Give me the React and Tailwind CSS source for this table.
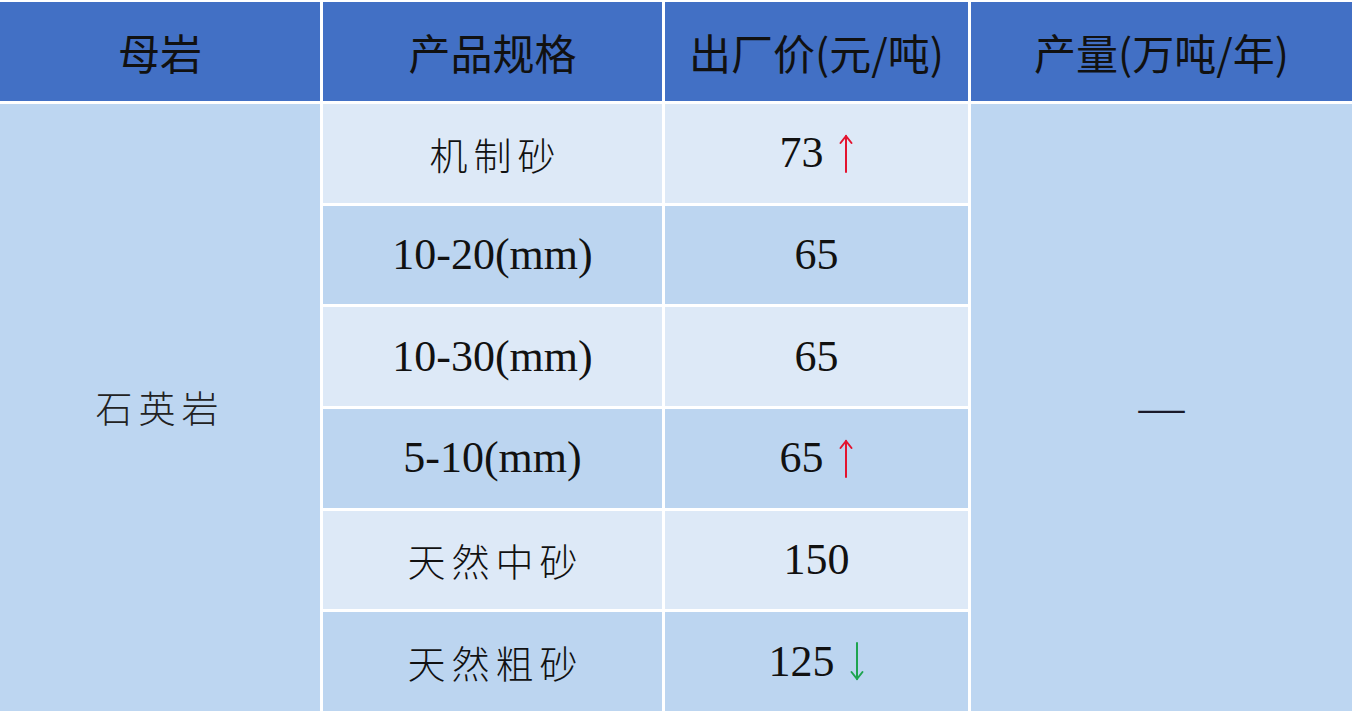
import React from 'react'

const rows = [
  { spec: '机制砂', cjk: true, price: '73', trend: 'up' },
  { spec: '10-20(mm)', price: '65' },
  { spec: '10-30(mm)', price: '65' },
  { spec: '5-10(mm)', price: '65', trend: 'up' },
  { spec: '天然中砂', cjk: true, price: '150' },
  { spec: '天然粗砂', cjk: true, price: '125', trend: 'down' },
]

const rowStart = ['row-start-2', 'row-start-3', 'row-start-4', 'row-start-5', 'row-start-6', 'row-start-7']

function Arrow({ dir }) {
  const color = dir === 'up' ? '#e3132f' : '#1ea44f'
  return (
    <svg width="16" height="40" viewBox="0 0 16 40" className="ml-[14px]">
      {dir === 'up' ? (
        <g stroke={color} strokeWidth="2" fill="none" strokeLinecap="round">
          <line x1="8" y1="3" x2="8" y2="39" />
          <path d="M2.5 10 L8 3 L13.5 10" />
        </g>
      ) : (
        <g stroke={color} strokeWidth="2" fill="none" strokeLinecap="round">
          <line x1="8" y1="1" x2="8" y2="37" />
          <path d="M2.5 30 L8 37 L13.5 30" />
        </g>
      )}
    </svg>
  )
}

export default function App() {
  return (
    <div className="w-[1352px] h-[714px] bg-white pt-[2px] pb-[3px]">
      <div className="grid h-full grid-cols-[320px_339px_303px_1fr] grid-rows-[99px_repeat(6,1fr)] gap-[3px]">
        {['母岩', '产品规格', '出厂价(元/吨)', '产量(万吨/年)'].map((h) => (
          <div
            key={h}
            className="flex items-center justify-center bg-[#4270c5] text-[42px] font-normal text-[#111] font-['Noto_Sans_CJK_SC',sans-serif]"
          >
            {h}
          </div>
        ))}

        <div className="col-start-1 row-start-2 row-span-6 flex items-center justify-center bg-[#bdd6f1] text-[37px] font-light tracking-[6px] text-[#222] font-['Noto_Sans_CJK_SC',sans-serif]">
          石英岩
        </div>

        {rows.map((r, i) => {
          const bg = i % 2 === 0 ? 'bg-[#dde9f7]' : 'bg-[#bcd5f0]'
          return (
            <React.Fragment key={r.spec}>
              <div
                className={`col-start-2 ${rowStart[i]} flex items-center justify-center ${bg} text-[#111] ${
                  r.cjk
                    ? "text-[38px] font-light tracking-[6px] pl-[6px] font-['Noto_Sans_CJK_SC',sans-serif]"
                    : "text-[44px] font-['Liberation_Serif',serif]"
                }`}
              >
                {r.spec}
              </div>
              <div
                className={`col-start-3 ${rowStart[i]} flex items-center justify-center ${bg} text-[44px] text-[#111] font-['Liberation_Serif',serif]`}
              >
                <span>{r.price}</span>
                {r.trend && <Arrow dir={r.trend} />}
              </div>
            </React.Fragment>
          )
        })}

        <div className="col-start-4 row-start-2 row-span-6 flex items-center justify-center bg-[#bdd6f1] text-[46px] text-[#1a1a2a] font-['Liberation_Serif',serif]">
          —
        </div>
      </div>
    </div>
  )
}
